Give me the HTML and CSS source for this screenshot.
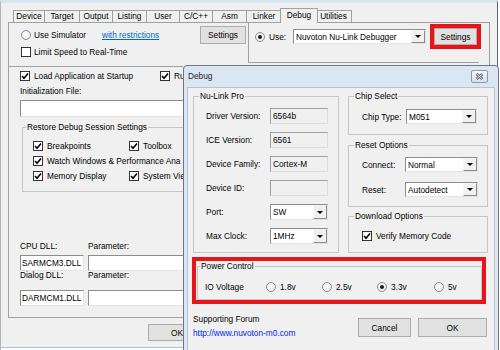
FILE: index.html
```html
<!DOCTYPE html>
<html lang="en">
<head>
<meta charset="utf-8">
<title>Options for Target - Debug</title>
<link rel="stylesheet" href="styles.css">
</head>
<body>
<div class="win">
  <div class="tabs">
    <span class="tab first w32">Device</span>
    <span class="tab w35">Target</span>
    <span class="tab w33">Output</span>
    <span class="tab w34">Listing</span>
    <span class="tab w33">User</span>
    <span class="tab w33">C/C++</span>
    <span class="tab w34">Asm</span>
    <span class="tab w35">Linker</span>
    <span class="tab sel">Debug</span>
    <span class="tab w36">Utilities</span>
  </div>
  <div class="panel">
    <div class="top">
      <div class="sim">
        <div class="r1">
          <span class="rb"></span><span class="lab-sim">Use Simulator</span>
          <span class="link">with restrictions</span>
          <button class="btn set1">Settings</button>
        </div>
        <div class="r2"><span class="cb"></span><span>Limit Speed to Real-Time</span></div>
      </div>
      <div class="use">
        <div class="use-row">
          <span class="rb on"></span><span class="lab-use">Use:</span>
          <span class="select combo"><span class="txt">Nuvoton Nu-Link Debugger</span><span class="arrow"></span></span>
          <button class="btn set2">Settings</button>
        </div>
      </div>
    </div>
    <div class="lower">
      <div class="sep"></div>
      <div class="row-load">
        <span class="ck"><span class="cb on"><svg viewBox="0 0 8 8"><path d="M1 4 L3 6.3 L7 1.5"/></svg></span>Load Application at Startup</span>
        <span class="ck"><span class="cb on"><svg viewBox="0 0 8 8"><path d="M1 4 L3 6.3 L7 1.5"/></svg></span>Ru</span>
      </div>
      <div class="initlbl">Initialization File:</div>
      <span class="edit init"></span>
      <fieldset class="grp restore">
        <legend>Restore Debug Session Settings</legend>
        <div class="restore-in">
          <span class="ck"><span class="cb on"><svg viewBox="0 0 8 8"><path d="M1 4 L3 6.3 L7 1.5"/></svg></span>Breakpoints</span>
          <span class="ck"><span class="cb on"><svg viewBox="0 0 8 8"><path d="M1 4 L3 6.3 L7 1.5"/></svg></span>Toolbox</span>
          <span class="ck span2"><span class="cb on"><svg viewBox="0 0 8 8"><path d="M1 4 L3 6.3 L7 1.5"/></svg></span>Watch Windows &amp; Performance Ana</span>
          <span class="ck"><span class="cb on"><svg viewBox="0 0 8 8"><path d="M1 4 L3 6.3 L7 1.5"/></svg></span>Memory Display</span>
          <span class="ck"><span class="cb on"><svg viewBox="0 0 8 8"><path d="M1 4 L3 6.3 L7 1.5"/></svg></span>System Vie</span>
        </div>
      </fieldset>
      <div class="dll-lbl"><span>CPU DLL:</span><span>Parameter:</span></div>
      <div class="dll-in"><span class="edit dll">SARMCM3.DLL</span><span class="edit"></span></div>
      <div class="dll-lbl dll-lbl2"><span>Dialog DLL:</span><span>Parameter:</span></div>
      <div class="dll-in dll-in2"><span class="edit dll">DARMCM1.DLL</span><span class="edit"></span></div>
    </div>
  </div>
  <div class="okrow"><button class="btn ok1">OK</button></div>
  <div class="foot"></div>
</div>

<div class="dlg">
  <div class="dlg-title">
    <span class="dlg-name">Debug</span>
    <span class="close"><svg viewBox="0 0 9 7"><path class="xo" d="M1.5 1 L7.5 6 M7.5 1 L1.5 6"/><path class="xi" d="M1.5 1 L7.5 6 M7.5 1 L1.5 6"/></svg></span>
  </div>
  <div class="dlg-body">
    <div class="upper">
      <fieldset class="grp nulink">
        <legend>Nu-Link Pro</legend>
        <div class="nl-rows">
          <div class="nl-row"><span class="lab">Driver Version:</span><span class="edit ro">6564b</span></div>
          <div class="nl-row"><span class="lab">ICE Version:</span><span class="edit ro">6561</span></div>
          <div class="nl-row"><span class="lab">Device Family:</span><span class="edit ro">Cortex-M</span></div>
          <div class="nl-row"><span class="lab">Device ID:</span><span class="edit ro"></span></div>
          <div class="nl-row"><span class="lab">Port:</span><span class="select"><span class="txt">SW</span><span class="arrow"></span></span></div>
          <div class="nl-row"><span class="lab">Max Clock:</span><span class="select"><span class="txt">1MHz</span><span class="arrow"></span></span></div>
        </div>
      </fieldset>
      <div class="rcol">
        <fieldset class="grp chip">
          <legend>Chip Select</legend>
          <div class="opt-in">
            <div class="opt-row"><span class="lab w44">Chip Type:</span><span class="select s71"><span class="txt">M051</span><span class="arrow"></span></span></div>
          </div>
        </fieldset>
        <fieldset class="grp reset">
          <legend>Reset Options</legend>
          <div class="opt-in reset-in">
            <div class="opt-row"><span class="lab w43">Connect:</span><span class="select s73"><span class="txt">Normal</span><span class="arrow"></span></span></div>
            <div class="opt-row"><span class="lab w43">Reset:</span><span class="select s73"><span class="txt">Autodetect</span><span class="arrow"></span></span></div>
          </div>
        </fieldset>
        <fieldset class="grp dl">
          <legend>Download Options</legend>
          <div class="dl-in">
            <span class="ck"><span class="cb on"><svg viewBox="0 0 8 8"><path d="M1 4 L3 6.3 L7 1.5"/></svg></span>Verify Memory Code</span>
          </div>
        </fieldset>
      </div>
    </div>
    <div class="redbox">
      <fieldset class="grp pwr">
        <legend>Power Control</legend>
        <div class="pwr-in">
          <span>IO Voltage</span>
          <span class="ck"><span class="rb"></span>1.8v</span>
          <span class="ck"><span class="rb"></span>2.5v</span>
          <span class="ck"><span class="rb on"></span>3.3v</span>
          <span class="ck"><span class="rb"></span>5v</span>
        </div>
      </fieldset>
    </div>
    <div class="bottom">
      <div class="forum">
        <div>Supporting Forum</div>
        <div class="flink">http://www.nuvoton-m0.com</div>
      </div>
      <button class="btn cancel">Cancel</button>
      <button class="btn ok2">OK</button>
    </div>
  </div>
</div>
</body>
</html>
```

FILE: styles.css
```css
* { box-sizing: border-box; }
html, body { margin: 0; padding: 0; }
body {
  width: 500px; height: 350px; overflow: hidden; position: relative;
  background: #ffffff;
  font-family: "Liberation Sans", Arial, sans-serif;
  font-size: 8.3px; line-height: 10px; color: #000;
}
.win {
  width: 498px; height: 350px; background: #f0f0f0;
  border-top: 3px solid #d9e5f2; border-left: 1px solid #b4b4b4; border-right: 1px solid #4d6785;
}

/* tabs */
.tabs { display: flex; align-items: flex-end; height: 14px; margin-top: 5px; padding-left: 12px; }
.tab {
  height: 12px; border-top: 1px solid #a0a0a0; border-right: 1px solid #a0a0a0;
  text-align: center; line-height: 10px; white-space: nowrap; background: #f0f0f0;
}
.tab.first { border-left: 1px solid #a0a0a0; }
.w32 { width: 32px; } .w33 { width: 33px; } .w34 { width: 34px; } .w35 { width: 35px; } .w36 { width: 36px; }
.tab.sel {
  width: 38px; height: 15px; margin: 0 -2px -1px; position: relative; z-index: 1;
  border-left: 1px solid #a0a0a0; line-height: 12px;
}

/* panel */
.panel { margin-left: 7px; width: 482px; height: 296px; border: 1px solid #a0a0a0; }
.top { display: flex; height: 40px; }
.sim { width: 240px; border-right: 1px solid #a0a0a0; padding: 3px 2px 0 12px; }
.r1 { display: flex; align-items: center; height: 18px; }
.r1 .rb { margin-right: 3px; }
.lab-sim { width: 68px; white-space: nowrap; }
.link { color: #0066cc; text-decoration: underline; white-space: nowrap; }
.set1 { margin-left: auto; width: 46px; height: 18px; }
.r2 { display: flex; align-items: center; height: 10px; margin-top: 3px; }
.r2 .cb { margin-right: 3px; }

.use { width: 230px; height: 40px; border-bottom: 1px solid #a0a0a0; padding: 5px 0 0 6px; }
.use-row { display: flex; align-items: center; height: 17px; }
.use-row .rb { margin-right: 4px; }
.lab-use { width: 24px; }
.combo { width: 133px; height: 15px; }
.set2 { margin-left: 8px; width: 43px; height: 17px; outline: 4px solid #e8141c; outline-offset: 0; }

/* controls */
.btn {
  font: inherit; color: #000; background: #e1e1e1; border: 1px solid #adadad; border-radius: 0;
  padding: 0; display: flex; align-items: center; justify-content: center; white-space: nowrap;
}
.edit {
  display: flex; align-items: center; background: #fff; white-space: nowrap;
  border: 1px solid; border-color: #8c8c8c #e3e3e3 #e3e3e3 #8c8c8c; padding: 0 2px; height: 16px;
}
.edit.ro { background: #f0f0f0; border-color: #a0a0a0 #dcdcdc #dcdcdc #a0a0a0; }
.select {
  display: flex; align-items: stretch; background: #fff; white-space: nowrap;
  border: 1px solid; border-color: #8c8c8c #e3e3e3 #e3e3e3 #8c8c8c;
}
.select .txt { flex: 1; padding-left: 2px; display: flex; align-items: center; overflow: hidden; }
.arrow {
  width: 14px; display: flex; align-items: center; justify-content: center;
  background: #f0f0f0; border: 1px solid; border-color: #f8f8f8 #8c8c8c #8c8c8c #f8f8f8;
}
.arrow::after {
  content: ""; width: 0; height: 0;
  border-left: 3px solid transparent; border-right: 3px solid transparent; border-top: 3px solid #000;
}
.cb {
  width: 10px; height: 10px; flex: none; border: 1px solid #333; background: #fff;
  display: inline-flex; align-items: center; justify-content: center;
}
.cb svg { width: 8px; height: 8px; }
.cb path { fill: none; stroke: #000; stroke-width: 1.6; }
.rb {
  width: 10px; height: 10px; flex: none; border-radius: 50%; border: 1px solid #8d8d8d;
  background: radial-gradient(circle at 50% 40%, #ffffff 0, #e6e6e6 100%);
  display: inline-flex; align-items: center; justify-content: center;
}
.rb.on::after { content: ""; width: 4px; height: 4px; border-radius: 50%; background: #1a1a1a; }
.ck { display: flex; align-items: center; white-space: nowrap; }
.ck .cb, .ck .rb { margin-right: 4px; }

fieldset.grp { margin: 0; padding: 0; border: 1px solid #c6c6c6; min-width: 0; }
fieldset.grp legend { padding: 0 1px; line-height: 10px; height: 10px; white-space: nowrap; }

/* the part of the left column that the dialog does not cover */
.lower { width: 174px; height: 254px; overflow: hidden; }
.sep { margin-top: 3px; width: 240px; border-top: 1px solid #a0a0a0; }
.row-load { display: grid; grid-template-columns: 140px 60px; padding-left: 11px; margin-top: 4px; height: 10px; }
.initlbl { margin-top: 5px; padding-left: 11px; height: 10px; }
.edit.init { margin: 4px 0 0 11px; width: 220px; height: 17px; }
fieldset.grp.restore { margin: 5px 0 0 13px; width: 300px; }
fieldset.grp.restore legend { margin-left: 3px; }
.restore-in { display: grid; grid-template-columns: 96px 150px; row-gap: 5px; padding: 9px 0 10px 10px; }
.restore-in .ck { height: 10px; }
.span2 { grid-column: span 2; }
.dll-lbl { display: grid; grid-template-columns: 68px auto; padding-left: 11px; margin-top: 49px; height: 10px; }
.dll-in { display: grid; grid-template-columns: 64px 200px; column-gap: 4px; padding-left: 11px; margin-top: 4px; height: 16px; }
.dll-lbl2 { margin-top: -1px; }
.dll-in2 { margin-top: 10px; }
.edit.dll { padding-left: 1px; white-space: nowrap; overflow: hidden; }

.okrow { margin-top: 6px; padding-left: 147px; height: 17px; }
.ok1 { width: 58px; height: 17px; }
.foot { margin-top: 6px; height: 3px; border-top: 1px solid #a7c3e0; background: #fff; }

/* dialog */
.dlg {
  position: absolute; left: 183px; top: 65px; width: 316px; height: 300px;
  border: 1px solid #6b7785; border-radius: 4px 4px 0 0; background: #dbe6f3; padding: 0 3px;
}
.dlg-title { height: 20px; display: flex; align-items: center; padding-left: 1px; color: #1e1e1e; }
.close {
  margin-left: auto; margin-right: 7px; width: 17px; height: 13px;
  border: 1px solid #8d9aab; border-radius: 2px; background: linear-gradient(#f5f8fb, #d6dee8);
  display: flex; align-items: center; justify-content: center;
}
.close svg { width: 9px; height: 7px; }
.close .xo { stroke: #5c6570; stroke-width: 2.6; fill: none; }
.close .xi { stroke: #eef2f6; stroke-width: 0.9; fill: none; }
.dlg-body { margin-top: 1px; border: 1px solid #b5c3d3; background: #f0f0f0; height: 290px; }

.upper { display: flex; margin-top: 3px; padding-left: 5px; }
.nulink { width: 146px; }
.nulink legend, .chip legend, .reset legend, .dl legend { margin-left: 5px; }
.nl-rows { display: flex; flex-direction: column; gap: 8px; padding: 7px 0 8px 12px; }
.nl-row { display: flex; align-items: center; height: 16px; }
.nl-row .lab { width: 64px; white-space: nowrap; }
.nl-row .edit, .nl-row .select { width: 58px; height: 16px; }

.rcol { margin-left: 9px; width: 140px; display: flex; flex-direction: column; }
.opt-in { display: flex; flex-direction: column; padding: 8px 0 10px 13px; }
fieldset.grp.reset { margin-top: 5px; }
.reset-in { padding: 7px 0 9px 13px; gap: 10px; }
.opt-row { display: flex; align-items: center; height: 15px; }
.opt-row .lab { white-space: nowrap; }
.w44 { width: 44px; } .w43 { width: 43px; }
.s71 { width: 71px; height: 15px; } .s73 { width: 73px; height: 15px; }
fieldset.grp.dl { margin-top: 4px; }
.dl-in { padding: 10px 0 11px 13px; }
.dl-in .ck { height: 10px; }

.redbox { margin: 4px 0 0 4px; width: 294px; border: 4px solid #e8141c; padding-left: 1px; }
.pwr { width: 285px; }
.pwr legend { margin-left: 2px; }
.pwr-in { display: grid; grid-template-columns: 61px 56px 55px 57px auto; align-items: center; height: 28px; padding: 11px 0 7px 7px; }

.bottom { display: flex; margin-top: 10px; padding-left: 5px; }
.forum { width: 165px; }
.flink { margin-top: 4px; color: #0026e6; }
.cancel { margin-top: 4px; width: 53px; height: 19px; }
.ok2 { margin-top: 4px; margin-left: 7px; width: 69px; height: 19px; }
```
